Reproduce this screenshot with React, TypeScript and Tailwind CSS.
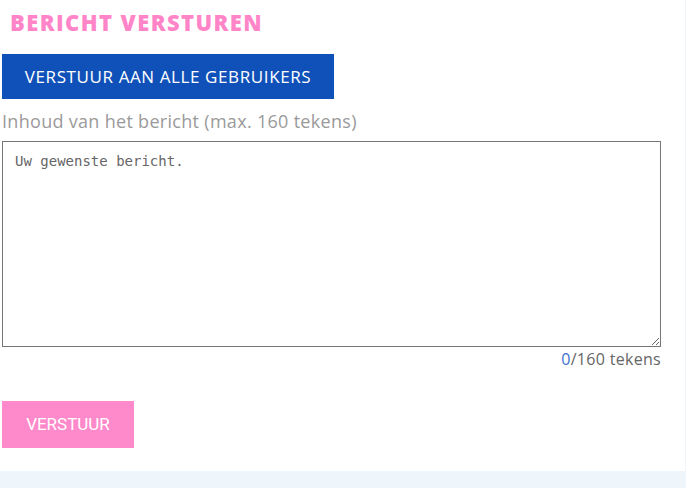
export default function App() {
  return (
    <div className="min-h-[488px] w-[686px] bg-[#eef6fc]" style={{ fontFamily: '"Open Sans", "Liberation Sans", sans-serif' }}>
      <div className="w-[685px] bg-white h-[471px] pt-[8px]">
        <h2 className="pl-[10px] text-[22px] font-extrabold leading-[28px] tracking-[1.4px] text-[#ff85c8]">BERICHT VERSTUREN</h2>
        <button className="mt-[18px] ml-[2px] h-[45px] w-[332px] bg-[#0f51b9] text-[17px] tracking-[0.6px] text-white">
          VERSTUUR AAN ALLE GEBRUIKERS
        </button>
        <div className="mt-[10px] pl-[2px] text-[18px] leading-[24px] tracking-[0.3px] text-[#9a9a9a]">
          Inhoud van het bericht (max. 160 tekens)
        </div>
        <div className="mt-[8px] pl-[2px] w-[661px]">
          <textarea
            className="block h-[206px] w-[659px] border border-[#767676] px-[12px] py-[9px] text-[14px] leading-[20px] text-[#555] placeholder:text-[#666] outline-none"
            style={{ fontFamily: 'Consolas, "DejaVu Sans Mono", "Liberation Mono", monospace' }}
            placeholder="Uw gewenste bericht."
          />
          <div className="mt-[1px] text-right text-[16px] leading-[22px] tracking-[0.3px] text-[#666]">
            <span className="text-[#3f6fd0]">0</span>/160 tekens
          </div>
        </div>
        <button className="mt-[31px] ml-[2px] h-[47px] w-[132px] bg-[#ff8acb] text-[17px] text-white" style={{ fontFamily: 'Roboto, "Liberation Sans", sans-serif' }}>
          VERSTUUR
        </button>
      </div>
    </div>
  );
}
